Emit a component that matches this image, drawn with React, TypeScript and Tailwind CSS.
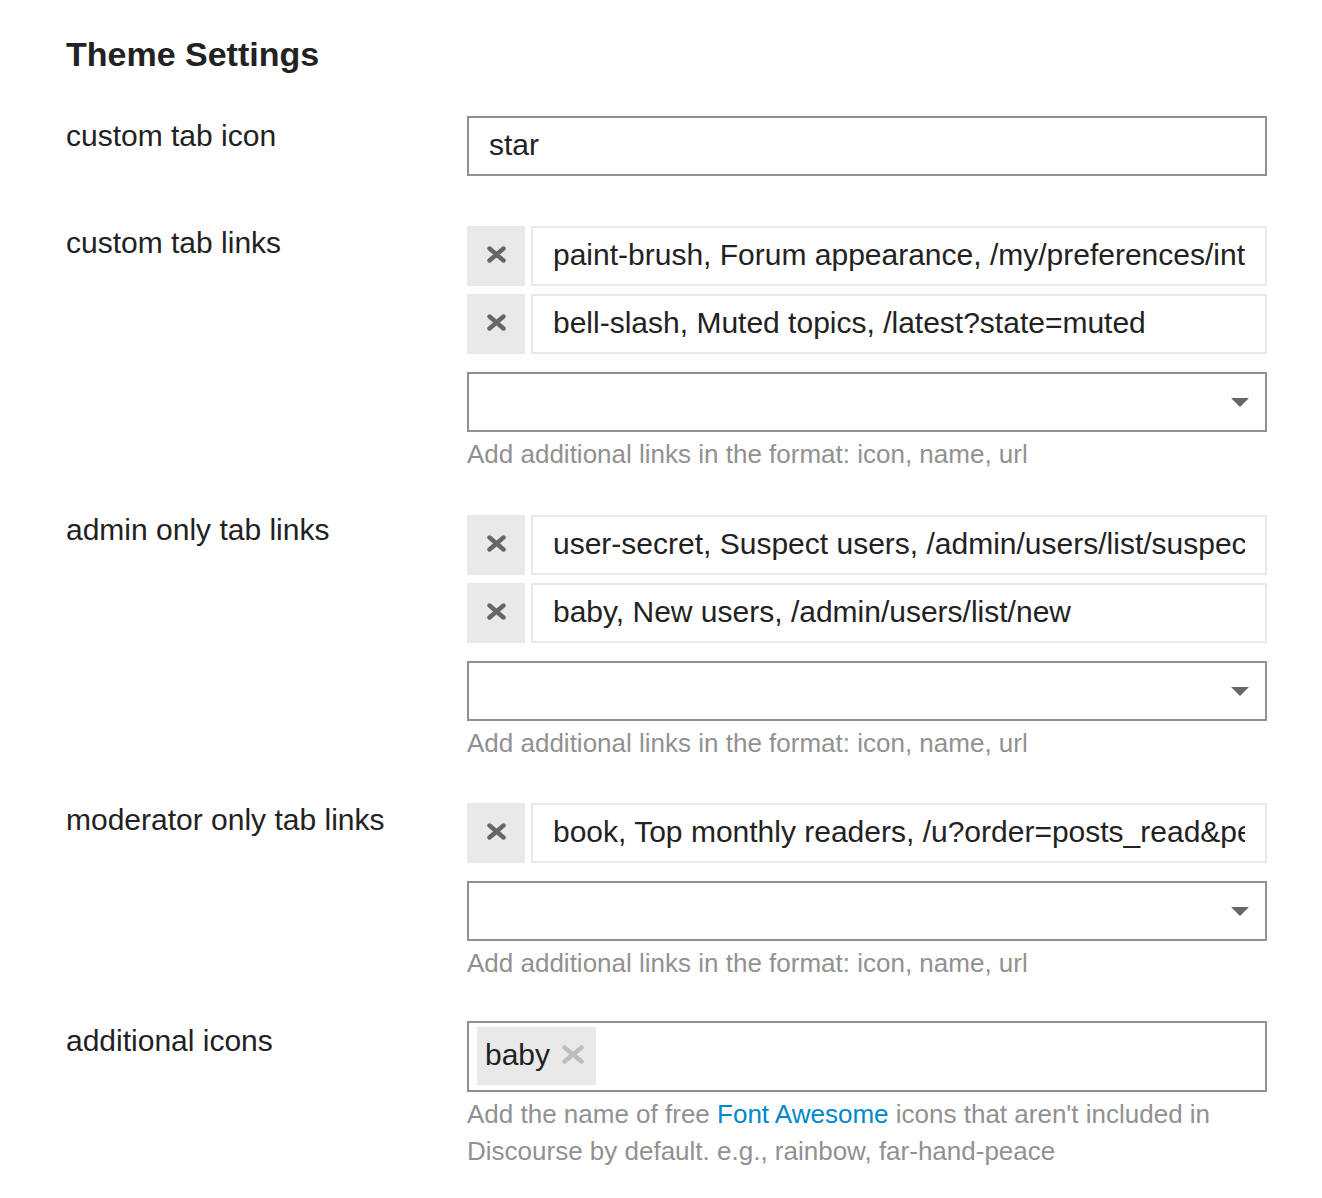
import React from "react";

const FONT = { fontFamily: '"Liberation Sans", Arial, Helvetica, sans-serif' };

// X GLYPH (FA "times" look)
function TimesIcon({ w, h, color }: { w: number; h: number; color: string }) {
  return (
    <svg width={w} height={h} viewBox={`0 0 ${w} ${h}`} fill="none">
      <path
        d={`M2.5 2.5 L${w - 2.5} ${h - 2.5} M${w - 2.5} 2.5 L2.5 ${h - 2.5}`}
        stroke={color}
        strokeWidth={4.4}
        strokeLinecap="round"
      />
    </svg>
  );
}

function Caret() {
  return (
    <svg width="18" height="9" viewBox="0 0 18 9">
      <path d="M0 0 H18 L9 9 Z" fill="#666666" />
    </svg>
  );
}

function SettingRow({
  label,
  labelClass = "",
  children,
}: {
  label: string;
  labelClass?: string;
  children: React.ReactNode;
}) {
  return (
    <div className="flex">
      <div className={`w-[401px] shrink-0 text-[30px] leading-[40px] text-[#222222] ${labelClass}`}>{label}</div>
      <div className="w-[800px]">{children}</div>
    </div>
  );
}

function LinkItem({ value }: { value: string }) {
  return (
    <div className="flex h-[60px] gap-[6px]">
      <div className="flex w-[58px] shrink-0 items-center justify-center bg-[#e9e9e9] pb-[3px]">
        <TimesIcon w={19} h={17} color="#666666" />
      </div>
      <div className="flex min-w-0 flex-1 items-center border-2 border-[#e9e9e9] px-[20px] pb-[4px]">
        <div className="overflow-hidden whitespace-nowrap text-[30px] text-[#222222]">{value}</div>
      </div>
    </div>
  );
}

function Dropdown() {
  return (
    <div className="flex h-[60px] items-center justify-end border-2 border-[#919191] pr-[16px]">
      <Caret />
    </div>
  );
}

function Help({ children, className = "" }: { children: React.ReactNode; className?: string }) {
  return <div className={`text-[26px] leading-[37px] text-[#919191] ${className}`}>{children}</div>;
}

function LinkList({ items }: { items: string[] }) {
  return (
    <div>
      <div className="flex flex-col gap-[8px]">
        {items.map((item) => (
          <LinkItem key={item} value={item} />
        ))}
      </div>
      <div className="mt-[18px]">
        <Dropdown />
      </div>
      <Help className="mt-[4px]">Add additional links in the format: icon, name, url</Help>
    </div>
  );
}

export default function App() {
  return (
    <div className="min-h-[1198px] bg-white pl-[66px] pt-[34px]" style={FONT}>
      <h2 className="text-[34px] font-bold leading-[40px] text-[#222222]">Theme Settings</h2>

      {/* CUSTOM TAB ICON */}
      <div className="mt-[42px]">
        <SettingRow label="custom tab icon">
          <div className="flex h-[60px] items-center border-2 border-[#919191] px-[20px] pb-[4px] text-[30px] text-[#222222]">
            star
          </div>
        </SettingRow>
      </div>

      {/* CUSTOM TAB LINKS */}
      <div className="mt-[50px]">
        <SettingRow label="custom tab links" labelClass="-mt-[3px]">
          <LinkList
            items={[
              "paint-brush, Forum appearance, /my/preferences/interface",
              "bell-slash, Muted topics, /latest?state=muted",
            ]}
          />
        </SettingRow>
      </div>

      {/* ADMIN ONLY */}
      <div className="mt-[42px]">
        <SettingRow label="admin only tab links" labelClass="-mt-[5px]">
          <LinkList
            items={[
              "user-secret, Suspect users, /admin/users/list/suspect",
              "baby, New users, /admin/users/list/new",
            ]}
          />
        </SettingRow>
      </div>

      {/* MODERATOR ONLY */}
      <div className="mt-[41px]">
        <SettingRow label="moderator only tab links" labelClass="-mt-[3px]">
          <LinkList items={["book, Top monthly readers, /u?order=posts_read&period=monthly"]} />
        </SettingRow>
      </div>

      {/* ADDITIONAL ICONS */}
      <div className="mt-[39px]">
        <SettingRow label="additional icons">
          <div className="flex h-[71px] items-start border-2 border-[#919191] pl-[8px] pt-[4px]">
            <div className="flex h-[58px] items-center gap-[12px] bg-[#e9e9e9] pb-[4px] pl-[8px] pr-[12px]">
              <span className="text-[30px] text-[#222222]">baby</span>
              <TimesIcon w={22} h={19} color="#bdbdbd" />
            </div>
          </div>
          <Help className="mt-[4px]">
            Add the name of free <span className="text-[#0088cc]">Font Awesome</span> icons that aren't included in
            Discourse by default. e.g., rainbow, far-hand-peace
          </Help>
        </SettingRow>
      </div>
    </div>
  );
}
